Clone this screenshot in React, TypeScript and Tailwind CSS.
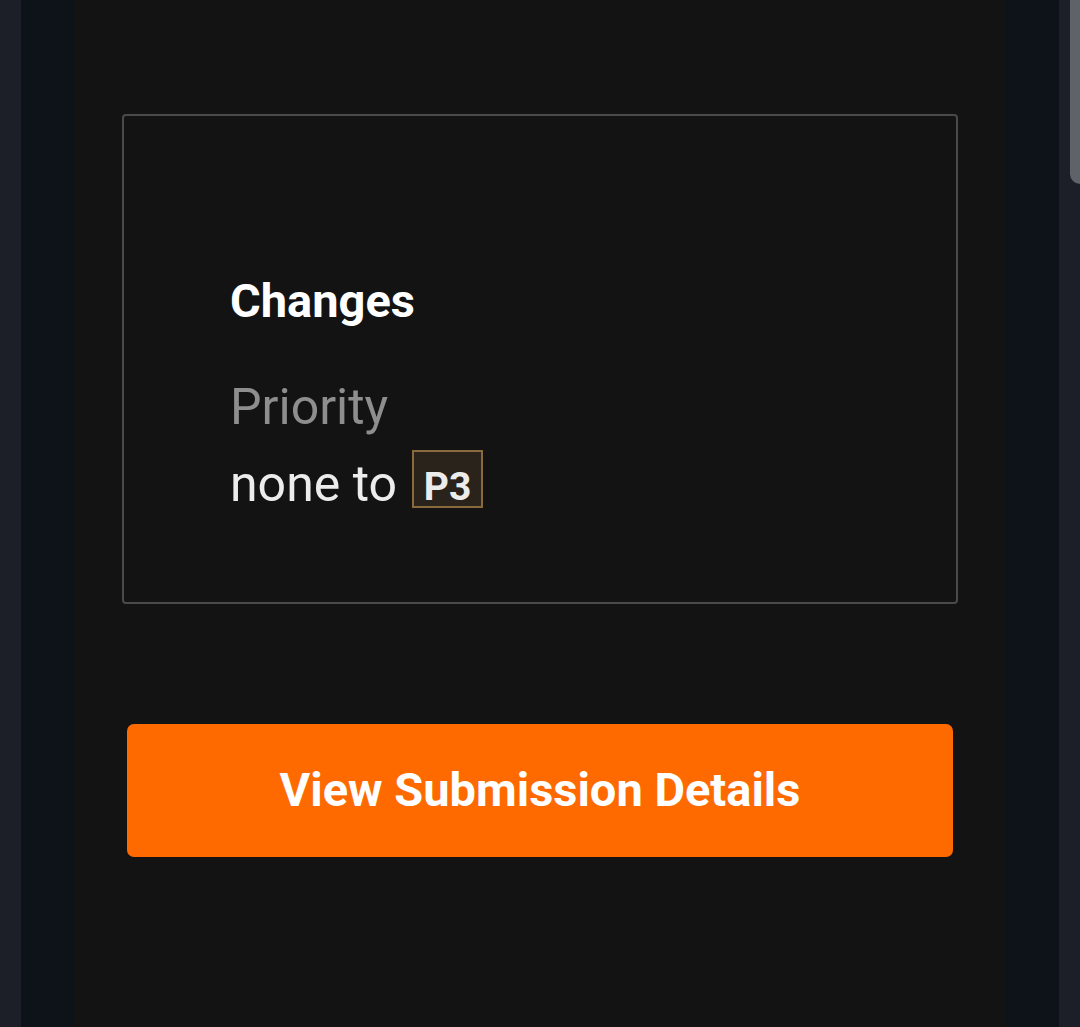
import React from 'react';

const Badge: React.FC<{ label: string }> = ({ label }) => (
  <span className="inline-flex items-center justify-center w-[71px] h-[58px] pt-[16px] border-2 border-[#8a6a3c] bg-[#2a231b] text-[#ececec] font-bold text-[39px] leading-none -translate-y-[5px]">
    {label}
  </span>
);

export default function App() {
  return (
    <div className="flex w-[1080px] h-[1027px] overflow-hidden" style={{ fontFamily: 'Roboto, "Noto Sans", sans-serif' }}>
      <div className="w-[21px] bg-[#1c1f27]" />
      <div className="w-[53px] bg-[#0e1219]" />
      <main className="flex-1 bg-[#131313]">
        {/* changes card */}
        <div className="mt-[114px] ml-[48px] w-[836px] h-[490px] border-2 border-[#4a4a4a] rounded-[4px] pl-[106px] pt-[159px]">
          <h3 className="text-white font-bold text-[47px] leading-[52px]">Changes</h3>
          <div className="mt-[50px] text-[50px] leading-[60px] text-[#8e8e8e]">Priority</div>
          <div className="mt-[17px] text-[50px] leading-[60px] text-[#ececec] flex items-center gap-[15px]">
            <span>none to</span>
            <Badge label="P3" />
          </div>
        </div>

        <button className="mt-[120px] ml-[53px] w-[826px] h-[133px] rounded-[7px] bg-[#ff6a00] text-white font-bold text-[47px] flex items-center justify-center">
          View Submission Details
        </button>
      </main>
      <div className="w-[53px] bg-[#0e1219]" />
      <div className="relative w-[21px] bg-[#1c1f27]">
        <div className="absolute right-0 top-0 w-[10px] h-[184px] rounded-bl-[10px] bg-[#5f6268]" />
      </div>
    </div>
  );
}
